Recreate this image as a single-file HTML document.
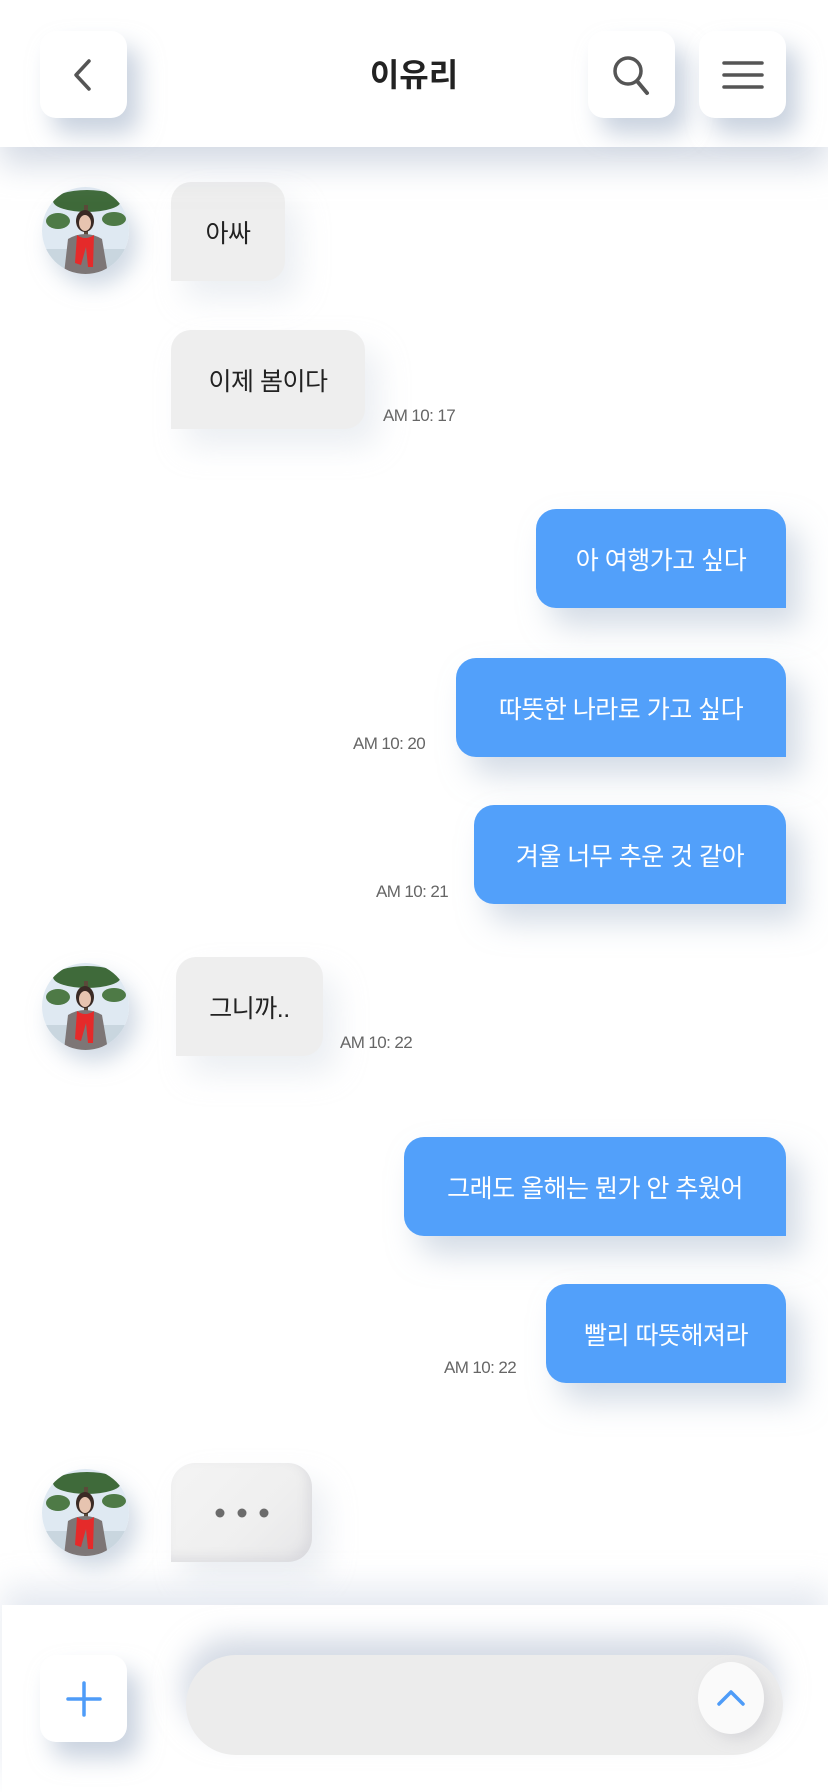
<!DOCTYPE html>
<html><head><meta charset="utf-8"><style>
*{margin:0;padding:0;box-sizing:border-box}
body{width:828px;height:1792px;background:#fff;position:relative;overflow:hidden;font-family:"Liberation Sans","Noto Sans CJK KR",sans-serif}
.hdr{position:absolute;left:0;top:0;width:828px;height:147px;background:#fff;box-shadow:0 18px 30px rgba(185,195,212,.6);z-index:2}
.btn{position:absolute;width:87px;height:87px;background:#fff;border-radius:16px;box-shadow:12px 16px 24px rgba(165,180,202,.6);display:flex;align-items:center;justify-content:center}
.title{position:absolute;left:0;width:828px;top:50px;text-align:center;font-size:32px;font-weight:bold;color:#222}
.av{position:absolute;left:42px;width:87px;height:87px;border-radius:50%;overflow:hidden;box-shadow:8px 12px 22px rgba(170,185,205,.55)}
.b{position:absolute;height:99px;display:flex;align-items:center;justify-content:center;font-size:25px;letter-spacing:-0.5px}
.r{background:#eeeeee;color:#222;border-radius:20px 20px 20px 0;box-shadow:14px 18px 30px rgba(200,208,220,.35)}
.s{background:#52a0fa;color:#fff;border-radius:20px 20px 0 20px;box-shadow:14px 18px 30px rgba(170,185,205,.5)}
.t{position:absolute;font-size:17px;color:#666;letter-spacing:-0.6px}
.bot{position:absolute;left:2px;top:1605px;width:826px;height:187px;background:#fff;box-shadow:0 -18px 30px rgba(220,225,235,.7)}
</style></head><body>
<div class="hdr">
 <div class="btn" style="left:40px;top:31px"><svg width="40" height="40" viewBox="0 0 40 40"><path d="M25 6 L12 20 L25 34" fill="none" stroke="#555" stroke-width="3.5" stroke-linecap="round" stroke-linejoin="round"/></svg></div>
 <div class="title">이유리</div>
 <div class="btn" style="left:588px;top:31px"><svg width="50" height="50" viewBox="0 0 50 50"><circle cx="21" cy="21" r="13" fill="none" stroke="#555" stroke-width="3.5"/><path d="M30 31 L40 43" stroke="#555" stroke-width="4" stroke-linecap="round"/></svg></div>
 <div class="btn" style="left:699px;top:31px"><svg width="44" height="40" viewBox="0 0 44 40"><path d="M3 8H41M3 20H41M3 32H41" stroke="#555" stroke-width="3.5" stroke-linecap="round"/></svg></div>
</div>

<svg width="0" height="0" style="position:absolute"><defs><g id="pic">
<rect width="87" height="87" fill="#dfe9f2"/><rect y="62" width="87" height="25" fill="#c9d6df"/>
<ellipse cx="45" cy="14" rx="34" ry="11" fill="#3f6a3a"/><ellipse cx="16" cy="34" rx="12" ry="8" fill="#4e7a46"/><ellipse cx="72" cy="32" rx="12" ry="7" fill="#4e7a46"/>
<rect x="42" y="18" width="4" height="30" fill="#5b4a3a"/>
<path d="M22 87 L26 52 Q43 42 60 52 L66 87Z" fill="#7d7676"/>
<ellipse cx="43" cy="34" rx="9" ry="11" fill="#3a2a25"/><ellipse cx="43" cy="36" rx="6" ry="8" fill="#e7c4b0"/>
<path d="M35 48 Q43 54 52 48 L51 80 L46 80 L44 60 L39 78 L33 76Z" fill="#e52a2a"/>
</g></defs></svg>

<div class="av" style="top:187px"><svg width="87" height="87"><use href="#pic"/></svg></div>
<div class="b r" style="left:171px;top:182px;width:114px">아싸</div>
<div class="b r" style="left:171px;top:330px;width:194px">이제 봄이다</div>
<div class="t" style="left:383px;top:406px">AM 10: 17</div>

<div class="b s" style="left:536px;top:509px;width:250px">아 여행가고 싶다</div>
<div class="b s" style="left:456px;top:658px;width:330px">따뜻한 나라로 가고 싶다</div>
<div class="t" style="left:353px;top:734px">AM 10: 20</div>
<div class="b s" style="left:474px;top:805px;width:312px">겨울 너무 추운 것 같아</div>
<div class="t" style="left:376px;top:882px">AM 10: 21</div>

<div class="av" style="top:963px"><svg width="87" height="87"><use href="#pic"/></svg></div>
<div class="b r" style="left:176px;top:957px;width:147px">그니까..</div>
<div class="t" style="left:340px;top:1033px">AM 10: 22</div>

<div class="b s" style="left:404px;top:1137px;width:382px">그래도 올해는 뭔가 안 추웠어</div>
<div class="b s" style="left:546px;top:1284px;width:240px">빨리 따뜻해져라</div>
<div class="t" style="left:444px;top:1358px">AM 10: 22</div>

<div class="av" style="top:1469px"><svg width="87" height="87"><use href="#pic"/></svg></div>
<div class="b r" style="left:171px;top:1463px;width:141px;background:linear-gradient(135deg,#f4f4f4,#efefef 60%,#e6e6e8);box-shadow:inset -5px -5px 10px rgba(205,205,210,.45),14px 18px 30px rgba(200,208,220,.35);border-radius:24px 24px 24px 0"><svg width="60" height="14"><circle cx="8" cy="7" r="4.5" fill="#6b6b6b"/><circle cx="30" cy="7" r="4.5" fill="#6b6b6b"/><circle cx="52" cy="7" r="4.5" fill="#6b6b6b"/></svg></div>

<div class="bot">
 <div class="btn" style="left:38px;top:50px"><svg width="40" height="40" viewBox="0 0 40 40"><path d="M20 4V36M4 20H36" stroke="#4e9cf8" stroke-width="3.5" stroke-linecap="round"/></svg></div>
 <div style="position:absolute;left:184px;top:50px;width:597px;height:100px;border-radius:50px;background:#ececec;box-shadow:-4px -18px 28px rgba(185,195,212,.6)"></div>
 <div style="position:absolute;left:696px;top:57px;width:66px;height:72px;border-radius:50%;background:#fafafa;box-shadow:6px 6px 12px rgba(200,200,205,.5);display:flex;align-items:center;justify-content:center"><svg width="30" height="20" viewBox="0 0 30 20"><path d="M3 16 L15 4 L27 16" fill="none" stroke="#4e9cf8" stroke-width="3.5" stroke-linecap="round" stroke-linejoin="round"/></svg></div>
</div>
</body></html>
